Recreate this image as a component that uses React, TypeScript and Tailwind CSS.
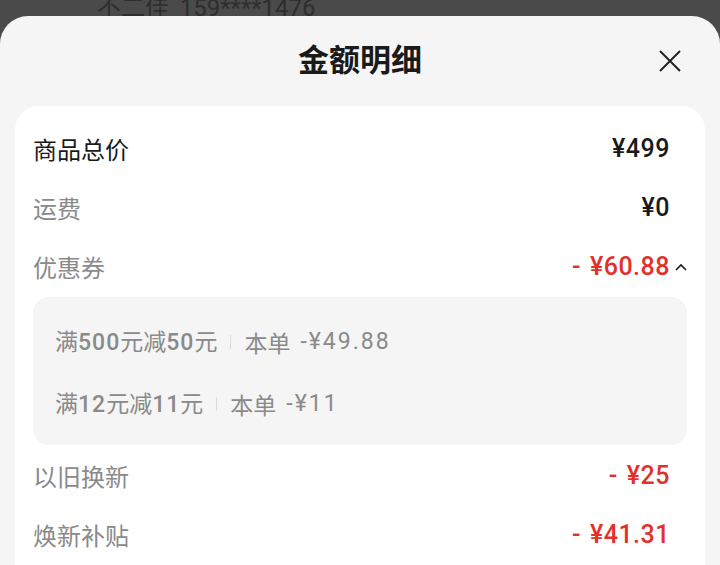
import { ReactNode } from "react";

const cjk = "font-['Noto_Sans_CJK_SC',sans-serif]";
const num = "font-['Roboto','Noto_Sans_CJK_SC',sans-serif]";

function Row({
  label,
  value,
  strong,
  minus,
  extra,
}: {
  label: string;
  value: string;
  strong?: boolean;
  minus?: boolean;
  extra?: ReactNode;
}) {
  return (
    <div className="flex h-[59px] items-center justify-between">
      <span
        className={`${cjk} text-[24px] ${strong ? "text-[#1a1a1a]" : "text-[#8a8a8a]"}`}
      >
        {label}
      </span>
      <div className="flex items-center">
        <span
          className={`${num} text-[25px] font-medium tracking-[0.5px] ${minus ? "text-[#e2302a]" : "text-[#1a1a1a]"}`}
        >
          {minus && <span className="mr-[9px]">-</span>}
          {value}
        </span>
        <span className="flex w-[17px] justify-end">{extra}</span>
      </div>
    </div>
  );
}

function CouponLine({ parts, amount }: { parts: [string, boolean][]; amount: string }) {
  return (
    <div className={`flex h-[30px] items-center text-[23px] text-[#8a8a8a] ${cjk}`}>
      <span>
        {parts.map(([t, isNum], i) => (
          <span key={i} className={isNum ? `${num} font-medium tracking-[1px]` : ""}>
            {t}
          </span>
        ))}
      </span>
      <span className="mx-[13px] h-[14px] w-px bg-[#dadada]" />
      <span>本单</span>
      <span className={`${num} ml-[10px] tracking-[2px]`}>{amount}</span>
    </div>
  );
}

export default function App() {
  return (
    <div className="flex h-[565px] w-[720px] flex-col overflow-hidden bg-[#4a4a4a]">
      <div className="h-[16px] shrink-0 overflow-hidden pl-[97px]">
        <div className={`-mt-[9px] text-[24px] leading-[30px] text-[#2e2e2e] ${cjk}`}>
          不二佳&nbsp;&nbsp;<span className={num}>159****1476</span>
        </div>
      </div>
      <div className="flex flex-1 flex-col rounded-t-[28px] bg-[#f5f5f5]">
        <div className="relative flex h-[90px] items-center justify-center pb-[6px]">
          <h1 className={`text-[31px] font-bold text-[#1a1a1a] ${cjk}`}>金额明细</h1>
          <button className="absolute right-[39px] top-[34px]">
            <svg width="22" height="22" viewBox="0 0 22 22">
              <path d="M1 1L21 21M21 1L1 21" stroke="#222" strokeWidth="2" />
            </svg>
          </button>
        </div>
        <div className="mx-[15px] flex-1 rounded-t-[24px] bg-white px-[18px] pt-[13px]">
          <Row label="商品总价" value="¥499" strong />
          <Row label="运费" value="¥0" />
          <Row
            label="优惠券"
            value="¥60.88"
            minus
            extra={
              <svg width="12" height="8" viewBox="0 0 12 8">
                <path d="M1 7L6 2L11 7" fill="none" stroke="#1a1a1a" strokeWidth="1.6" />
              </svg>
            }
          />
          <div className="mt-px flex flex-col gap-[32px] rounded-[16px] bg-[#f5f5f5] px-[22px] pb-[26px] pt-[30px]">
            <CouponLine
              parts={[
                ["满", false],
                ["500", true],
                ["元减", false],
                ["50", true],
                ["元", false],
              ]}
              amount="-¥49.88"
            />
            <CouponLine
              parts={[
                ["满", false],
                ["12", true],
                ["元减", false],
                ["11", true],
                ["元", false],
              ]}
              amount="-¥11"
            />
          </div>
          <div className="pt-px">
            <Row label="以旧换新" value="¥25" minus />
            <Row label="焕新补贴" value="¥41.31" minus />
          </div>
        </div>
      </div>
    </div>
  );
}
